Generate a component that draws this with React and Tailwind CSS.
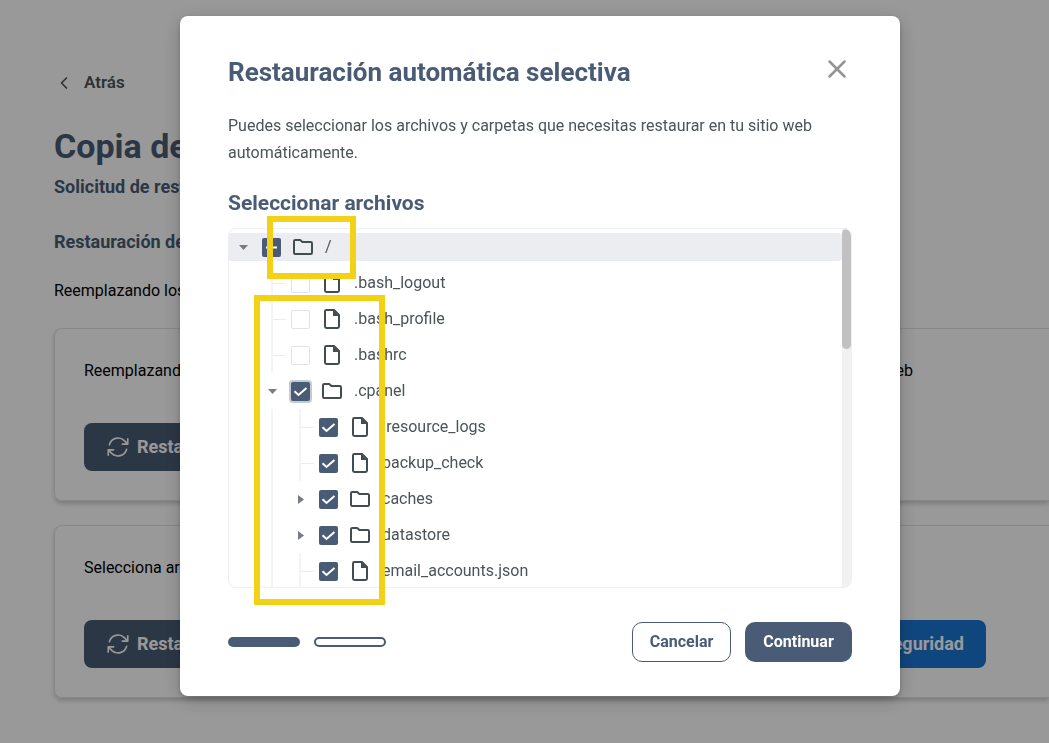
import { HiOutlineArrowPath } from 'react-icons/hi2';
import { ChevronLeft, X } from 'lucide-react';

const FILES = [
  { name: '/', level: 0, type: 'folder', state: 'mixed', open: true, active: true },
  { name: '.bash_logout', level: 1, type: 'file' },
  { name: '.bash_profile', level: 1, type: 'file' },
  { name: '.bashrc', level: 1, type: 'file' },
  { name: '.cpanel', level: 1, type: 'folder', state: 'checked', open: true, focused: true },
  { name: '.resource_logs', level: 2, type: 'file', state: 'checked' },
  { name: 'backup_check', level: 2, type: 'file', state: 'checked' },
  { name: 'caches', level: 2, type: 'folder', state: 'checked' },
  { name: 'datastore', level: 2, type: 'folder', state: 'checked' },
  { name: 'email_accounts.json', level: 2, type: 'file', state: 'checked' },
];

function FolderIcon() {
  return (
    <svg viewBox="0 0 20 16" className="w-5 h-4" fill="none" stroke="#414d50" strokeWidth="2" strokeLinejoin="round">
      <path d="M1 2.2Q1 1 2.2 1H7.2L9.4 3H17.8Q19 3 19 4.2V13.8Q19 15 17.8 15H2.2Q1 15 1 13.8Z" />
    </svg>
  );
}

function FileIcon() {
  return (
    <svg viewBox="0 0 16 20" className="w-4 h-5" fill="none" stroke="#414d50" strokeWidth="2" strokeLinejoin="round">
      <path d="M2.4 1H10L15 6V17.6Q15 19 13.6 19H2.4Q1 19 1 17.6V2.4Q1 1 2.4 1Z" />
      <path d="M9 1V7H15Z" fill="#414d50" stroke="none" />
    </svg>
  );
}

/* Arrow for folders, connector lines for plain files */
function Switcher({ item }) {
  if (item.type === 'folder') {
    return (
      <button aria-label={`Abrir ${item.name}`} className="w-[29px] h-full flex items-center justify-center">
        {item.open ? (
          <svg viewBox="0 0 9 5" className="w-[9px] h-[5px]" fill="#777c82"><path d="M0 0H9L4.5 5Z" /></svg>
        ) : (
          <svg viewBox="0 0 6 9" className="w-[6px] h-[9px]" fill="#777c82"><path d="M0 0L6 4.5L0 9Z" /></svg>
        )}
      </button>
    );
  }
  return (
    <span className="w-[29px] h-full flex items-center">
      <span className="w-[15px] h-full border-r-2 border-[#f4f4f7]" />
      <span className="w-[13px] h-px bg-[#ebecf2]" />
    </span>
  );
}

function Row({ item, id }) {
  const on = item.state === 'checked' || item.state === 'mixed';
  return (
    <li className="h-9 flex items-center">
      <div className={item.active ? 'h-7 flex-1 flex items-center bg-[#ecedf1] rounded-r-sm' : 'h-9 flex-1 flex items-center'}>
        {item.level > 0 && <span className="w-[29px]" />}
        {item.level > 1 && (
          <span className="w-7 h-full flex">
            <span className="w-[15px] h-full border-r-2 border-[#f4f4f7]" />
          </span>
        )}
        <Switcher item={item} />
        <span className="grid place-items-center ml-1">
          <input
            type="checkbox"
            id={id}
            defaultChecked={item.state === 'checked'}
            className={
              on
                ? item.focused
                  ? 'col-start-1 row-start-1 appearance-none size-[19px] rounded-xs bg-[#4a5c75] ring-2 ring-[#c5cbd4]'
                  : 'col-start-1 row-start-1 appearance-none size-[19px] rounded-xs bg-[#4a5c75]'
                : 'col-start-1 row-start-1 appearance-none size-[19px] rounded-xs border border-[#e2e3e7] bg-white'
            }
          />
          {on && (
            <svg viewBox="0 0 19 19" className="col-start-1 row-start-1 size-[19px] pointer-events-none" fill="none" stroke="white" strokeWidth="2">
              <path d={item.state === 'mixed' ? 'M4 9.5H15' : 'M3.5 9.2L7.5 13L15.5 6'} />
            </svg>
          )}
        </span>
        <label htmlFor={id} className="flex items-center gap-3 ml-3 text-base text-[#4b5457]">
          <span className="w-5 flex justify-center">
            {item.type === 'folder' ? <FolderIcon /> : <FileIcon />}
          </span>
          {item.name}
        </label>
      </div>
    </li>
  );
}

function RestoreCard({ start, end, children }) {
  return (
    <section className="rounded-l-lg border border-r-0 border-[#e2e2e2] shadow-[0_3px_4px_rgba(0,0,0,0.18)] pt-[30px] pb-[29px] pl-[29px]">
      <p className="flex justify-between w-[829px] leading-6 text-black">
        <span>{start}</span>
        <span>{end}</span>
      </p>
      <div className="flex justify-between w-[902px] mt-10">
        <button className="h-12 px-[21px] rounded-lg bg-[#4a5c75] text-white text-lg font-bold flex items-center gap-1.5">
          <HiOutlineArrowPath className="size-[26px]" />
          Restaurar
        </button>
        {children}
      </div>
    </section>
  );
}

export default function App() {
  return (
    <div className="min-h-screen overflow-hidden bg-white font-[Roboto,sans-serif]">
      <main className="pl-[54px] pt-[71px] pb-11 whitespace-nowrap">
        <a href="#" className="flex items-center gap-2.5 w-fit h-6 text-[17px] font-semibold text-[#4b5457]">
          <ChevronLeft size={20} />
          Atrás
        </a>
        <h1 className="mt-[29px] text-[34px] leading-[44px] font-bold text-[#4a5c75]">Copia de</h1>
        <h2 className="mt-[7px] text-lg leading-6 font-bold text-[#4a5c75]">Solicitud de restauración</h2>
        <h3 className="mt-[31px] text-lg leading-6 font-bold text-[#4a5c75]">Restauración de archivos</h3>
        <p className="mt-[25px] mb-[25px] text-base leading-6 text-black">Reemplazando los archivos</p>

        <div className="flex flex-col gap-6">
          <RestoreCard start="Reemplazando los archivos" end="web" />
          <RestoreCard start="Selecciona archivos" end="">
            <button className="h-12 w-60 px-[22px] rounded-lg bg-[#1a76d2] text-white text-lg font-bold text-right">
              seguridad
            </button>
          </RestoreCard>
        </div>
      </main>

      {/* Overlay */}
      <div className="fixed inset-0 bg-black/40 flex justify-center items-start pt-4 pl-[31px]">
        <div
          role="dialog"
          aria-labelledby="title"
          className="relative w-[720px] px-12 pt-10 pb-[34px] rounded-lg bg-white shadow-[0_2px_4px_rgba(0,0,0,0.2),0_4px_20px_rgba(0,0,0,0.2)]"
        >
          <div className="flex items-start justify-between">
            <h1 id="title" className="text-[26px] leading-8 font-bold text-[#4a5c75]">Restauración automática selectiva</h1>
            <button aria-label="Cerrar" className="h-[26px] flex items-center text-[#949494]">
              <X size={30} strokeWidth={2} />
            </button>
          </div>

          <p className="mt-6 text-base leading-[27px] text-[#4b5457]">
            Puedes seleccionar los archivos y carpetas que necesitas restaurar en tu sitio web automáticamente.
          </p>

          <h2 className="mt-[23px] text-[21px] leading-7 font-bold text-[#4a5c75]">Seleccionar archivos</h2>

          <div className="mt-[11px] h-[360px] flex overflow-hidden rounded-lg border border-[#edeff3]">
            <ul className="flex-1">
              {FILES.map((item, i) => (
                <Row key={item.name} item={item} id={`file-${i}`} />
              ))}
            </ul>
            <div className="w-[9px] bg-[#f1f1f1]">
              <div className="h-[120px] rounded-full bg-[#c1c1c1]" />
            </div>
          </div>

          <div className="flex items-center justify-between mt-[34px]">
            <div className="flex gap-3.5">
              <span className="w-[72px] h-2.5 rounded-full bg-[#4a5c75]" />
              <span className="w-[72px] h-2.5 rounded-full border-2 border-[#4a5c75]" />
            </div>
            <div className="flex gap-3.5">
              <button className="w-[99px] h-10 rounded-[10px] border border-[#4a5c75] text-[#4a5c75] text-base font-bold">Cancelar</button>
              <button className="w-[107px] h-10 rounded-[10px] bg-[#4a5c75] text-white text-base font-bold">Continuar</button>
            </div>
          </div>

          {/* Highlight frames over the tree */}
          <div className="absolute left-[87px] top-[200px] w-[89px] h-[63px] border-6 border-[#f2d116] pointer-events-none" />
          <div className="absolute left-[74px] top-[279px] w-[131px] h-[310px] border-6 border-[#f2d116] pointer-events-none" />
        </div>
      </div>
    </div>
  );
}
